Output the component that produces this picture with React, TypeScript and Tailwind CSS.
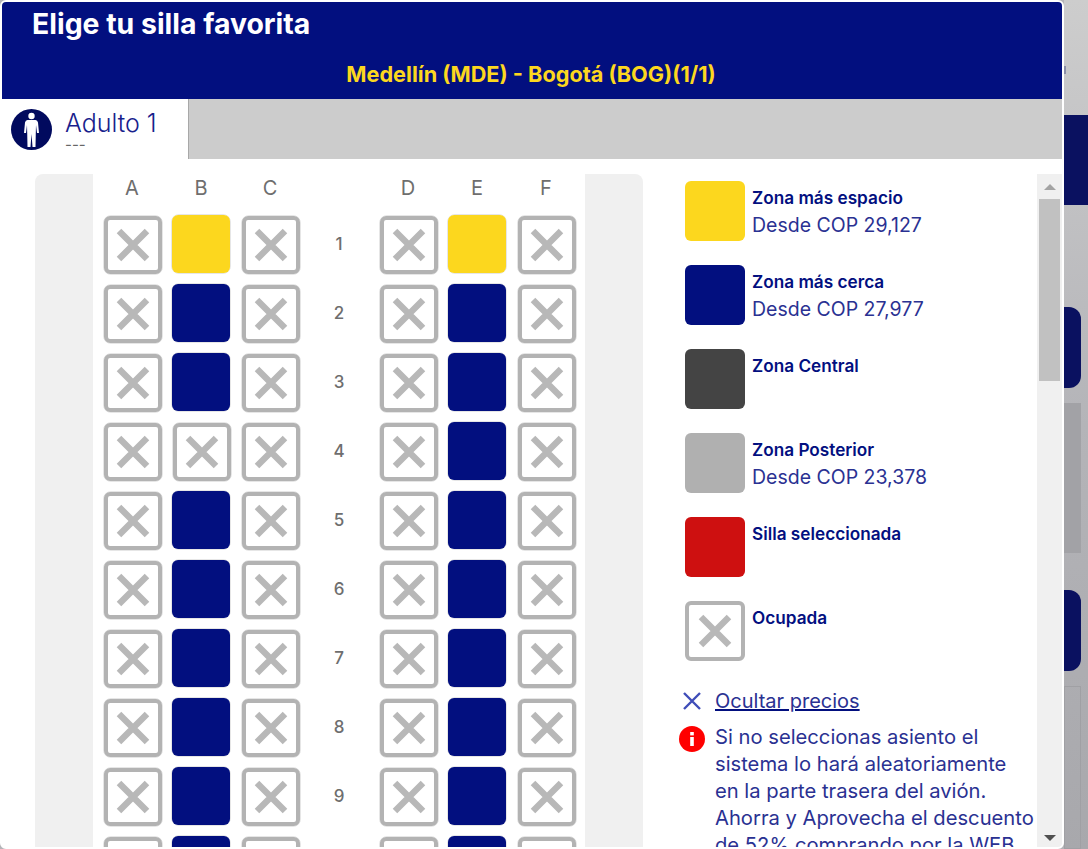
import { Fragment } from 'react';

const NAVY = 'bg-[#020f7f]';

const XMark = ({ size }: { size: number }) => (
  <svg width={size} height={size} viewBox="0 0 34 34">
    <path d="M3 3 L31 31 M31 3 L3 31" stroke="#b8b8b8" strokeWidth="6.4" fill="none" />
  </svg>
);

const Seat = ({ kind }: { kind: string }) => {
  if (kind === 'x') {
    return (
      <div className="w-[60px] h-[60px] rounded-lg border border-[#e6e6e6] bg-white">
        <div className="w-[58px] h-[58px] rounded-md border-4 border-[#b3b3b3] flex items-center justify-center">
          <XMark size={34} />
        </div>
      </div>
    );
  }
  return (
    <div className="w-[60px] h-[60px] -ml-px -mt-px rounded-lg border border-[#e6e6e6] bg-white">
      <div className={`w-[58px] h-[58px] rounded-md ${kind === 'y' ? 'bg-[#fcd71e]' : NAVY}`} />
    </div>
  );
};

const rows: [number, string, string][] = [
  [1, 'y', 'y'],
  [2, 'n', 'n'],
  [3, 'n', 'n'],
  [4, 'x', 'n'],
  [5, 'n', 'n'],
  [6, 'n', 'n'],
  [7, 'n', 'n'],
  [8, 'n', 'n'],
  [9, 'n', 'n'],
  [10, 'n', 'n'],
];

const legend = [
  { color: 'bg-[#fcd71e]', title: 'Zona más espacio', price: 'Desde COP 29,127' },
  { color: 'bg-[#020f7f]', title: 'Zona más cerca', price: 'Desde COP 27,977' },
  { color: 'bg-[#444444]', title: 'Zona Central', price: '' },
  { color: 'bg-[#b0b0b0]', title: 'Zona Posterior', price: 'Desde COP 23,378' },
  { color: 'bg-[#ce1010]', title: 'Silla seleccionada', price: '' },
];

const SeatMap = () => (
  <div className="w-[608px] ml-[33px] shrink-0 bg-[#f0f0f0] rounded-t-lg flex justify-center">
    <div className="w-[492px] bg-white pl-[10px]">
      <div className="grid grid-cols-[60px_60px_60px_60px_60px_60px_60px] gap-x-[9px] gap-y-[9px] content-start">
        {['A', 'B', 'C', '', 'D', 'E', 'F'].map((c, i) => (
          <div key={i} className="h-[32px] pb-[4px] pr-[2px] flex items-center justify-center text-[20px] text-[#6e6e6e]">
            {c}
          </div>
        ))}
        {rows.map(([n, b, e]) => (
          <Fragment key={n}>
            <Seat kind="x" />
            <Seat kind={b} />
            <Seat kind="x" />
            <div className="flex items-center justify-center pr-[2px] text-[17px] font-medium text-[#6e6e6e] h-[60px]">{n}</div>
            <Seat kind="x" />
            <Seat kind={e} />
            <Seat kind="x" />
          </Fragment>
        ))}
      </div>
    </div>
  </div>
);

const Legend = () => (
  <div className="w-[394px] shrink-0 pl-[42px] pt-[7px] text-[#020f7f]">
    <div className="flex flex-col gap-[24px]">
      {legend.map((l) => (
        <div key={l.title} className="flex gap-[7px] h-[60px]">
          <div className={`w-[60px] h-[60px] rounded-md ${l.color}`} />
          <div className="pt-[6px]">
            <div className="text-[17.2px] leading-[22px] font-semibold">{l.title}</div>
            <div className="text-[19.5px] leading-[27px] mt-[3px] text-[#2a3192]">{l.price}</div>
          </div>
        </div>
      ))}
      <div className="flex gap-[7px] h-[60px]">
        <div className="w-[60px] h-[60px] rounded-md border-4 border-[#b3b3b3] flex items-center justify-center">
          <XMark size={34} />
        </div>
        <div className="pt-[6px] text-[17.2px] leading-[22px] font-semibold">Ocupada</div>
      </div>
    </div>
    <div className="mt-[25px] -ml-[6px] flex items-center gap-[13px] h-[30px]">
      <svg width="20" height="20" viewBox="0 0 20 20" className="ml-[3px]">
        <path d="M2 2 L18 18 M18 2 L2 18" stroke="#3f4db8" strokeWidth="2.4" fill="none" />
      </svg>
      <span className="text-[20px] underline decoration-[#020f7f] text-[#2a3192]">Ocultar precios</span>
    </div>
    <div className="mt-[7px] -ml-[6px] flex items-start gap-[10px]">
      <svg width="26" height="26" viewBox="0 0 26 26" className="shrink-0 mt-[3px]">
        <circle cx="13" cy="13" r="13" fill="#ff0000" />
        <rect x="11.2" y="11" width="3.6" height="9" fill="#ffffff" />
        <rect x="11.2" y="6" width="3.6" height="3.4" fill="#ffffff" />
      </svg>
      <p className="shrink-0 whitespace-nowrap text-[20.2px] leading-[27px] text-[#2a3192]">
        Si no seleccionas asiento el
        <br />
        sistema lo hará aleatoriamente
        <br />
        en la parte trasera del avión.
        <br />
        Ahorra y Aprovecha el descuento
        <br />
        de 52% comprando por la WEB
      </p>
    </div>
  </div>
);

const Scrollbar = () => (
  <div className="w-[25px] bg-[#f0f0f0] h-full flex flex-col items-center shrink-0 relative z-10">
    <div className="h-[25px] w-full flex items-center justify-center">
      <div className="w-0 h-0 border-x-[6px] border-x-transparent border-b-[6px] border-b-[#a3a3a3]" />
    </div>
    <div className="w-[21px] h-[182px] bg-[#c1c1c1]" />
  </div>
);

const Modal = () => (
  <div className="w-[1064px] h-[849px] shrink-0 bg-white border-2 border-white rounded-md overflow-hidden flex flex-col relative">
    <div className={`${NAVY} h-[97px] shrink-0`}>
      <div className="pl-[30px] pt-[3px] text-[28.4px] leading-[38px] font-bold text-white">Elige tu silla favorita</div>
      <div className="mt-[16px] text-center pr-[2px] text-[21.7px] leading-[30px] font-bold text-[#fcd71e]">
        Medellín (MDE) - Bogotá (BOG)(1/1)
      </div>
    </div>
    <div className="h-[60px] shrink-0 flex bg-[#cccccc]">
      <div className="w-[187px] bg-white border-r border-[#a8a8a8] pl-[9px] flex items-center gap-[13px]">
        <svg width="41" height="41" viewBox="0 0 41 41" className="shrink-0">
          <circle cx="20.5" cy="20.5" r="20.5" fill="#010a5e" />
          <circle cx="20.5" cy="7" r="3.2" fill="#fff" />
          <path d="M16.5 11 H24.5 Q26.5 11 27 13.5 L28 24 H26 L25 16 L24.8 24 L24.5 38 H21.5 L20.5 25 L19.5 38 H16.5 L16.2 24 L16 16 L15 24 H13 L14 13.5 Q14.5 11 16.5 11 Z" fill="#fff" />
        </svg>
        <div>
          <div className="mt-[3px] text-[25px] leading-[30px] font-light text-[#18218c]">Adulto 1</div>
          <div className="-mt-[2px] text-[15px] leading-[18px] text-[#666666]">---</div>
        </div>
      </div>
    </div>
    <div className="flex-1 min-h-0 pt-[15px] flex overflow-hidden">
      <SeatMap />
      <Legend />
      <Scrollbar />
    </div>
    <div className="absolute z-20 right-[6px] bottom-[6px] w-0 h-0 border-x-[6px] border-x-transparent border-t-[6px] border-t-[#505050]" />
  </div>
);

const BackgroundStrip = () => (
  <div className="flex-1 h-full flex flex-col bg-gradient-to-b from-[#cdcdcd] via-[#b4b4b8] to-[#a8a8ac]">
    <div className="h-[115px] pt-[66px]">
      <div className="w-[2px] h-[8px] bg-[#8a8ea8]" />
    </div>
    <div className="h-[90px] bg-[#0a1160]" />
    <div className="h-[102px]" />
    <div className="h-[81px] w-[17px] bg-[#0a1160] rounded-r-xl" />
    <div className="h-[15px]" />
    <div className="h-[150px] w-[17px] bg-[#a2a2a6]" />
    <div className="h-[37px]" />
    <div className="h-[81px] w-[17px] bg-[#0a1160] rounded-r-xl" />
    <div className="h-[15px]" />
    <div className="flex-1 w-[17px] border border-[#a0a0a4]" />
  </div>
);

export default function App() {
  return (
    <div className="w-[1088px] h-[849px] overflow-hidden flex bg-[#b4b4b8] font-['Inter','Noto_Sans',sans-serif]">
      <Modal />
      <BackgroundStrip />
    </div>
  );
}
